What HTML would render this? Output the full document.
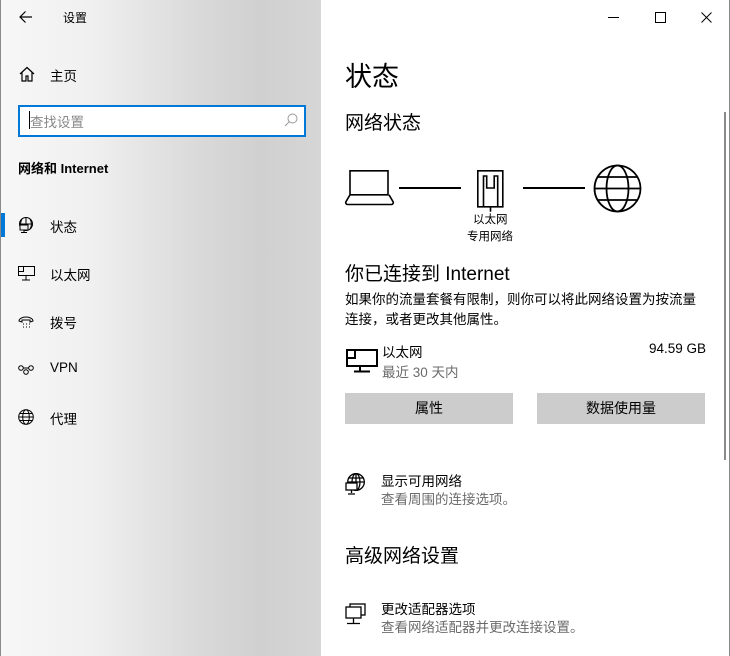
<!DOCTYPE html>
<html><head><meta charset="utf-8"><style>
*{margin:0;padding:0;box-sizing:border-box}
body{width:730px;height:656px;overflow:hidden;font-family:"Liberation Sans","Noto Sans CJK SC",sans-serif;color:#000;background:#fff;position:relative}
.left{position:absolute;left:0;top:0;width:321px;height:656px;background:linear-gradient(to right,#f7f7f7 0,#f0f0f0 90px,#d9d9d9 200px,#d0d0d0 260px,#d6d6d6 321px);border-left:1px solid #8a8a8a}
.right{position:absolute;left:321px;top:0;width:409px;height:656px;background:#fff;border-right:1px solid #8a8a8a}
.a{position:absolute;white-space:nowrap}
svg{position:absolute;overflow:visible}
.s{font-size:13.5px}
.g{color:#6b6b6b}
.btn{position:absolute;top:393px;height:31px;background:#ccc;font-size:14px;text-align:center;line-height:31px}
</style></head><body>
<div style="position:absolute;left:0;top:0;width:730px;height:1px;background:#5a5a5a"></div>
<div style="position:absolute;left:0;top:655px;width:730px;height:1px;background:#5a5a5a"></div>
<div class="left">
<svg style="left:18px;top:10px" width="14" height="14"><path d="M13 7H1M6.5 1.5L1 7l5.5 5.5" stroke="#000" stroke-width="1.2" fill="none"/></svg>
<div class="a" style="left:62px;top:9px;font-size:12px">设置</div>
<svg style="left:18px;top:66px" width="16" height="16"><path d="M1 8L8 1.5 15 8M3 6.5V15h4v-5h2v5h4V6.5" stroke="#000" stroke-width="1.2" fill="none"/></svg>
<div class="a s" style="left:49px;top:65px">主页</div>
<div class="a" style="left:17px;top:105px;width:288px;height:32px;border:2px solid #0078d7;background:#fff"></div>
<div class="a" style="left:28px;top:111px;width:1px;height:18px;background:#000"></div>
<div class="a" style="left:29px;top:111px;font-size:13.5px;color:#888">查找设置</div>
<svg style="left:283px;top:113px" width="14" height="14"><circle cx="8.5" cy="5.5" r="4.5" stroke="#999" fill="none"/><path d="M5.5 8.5L1 13" stroke="#999"/></svg>
<div class="a" style="left:17px;top:158px;font-size:13px;font-weight:bold">网络和 Internet</div>
<div class="a" style="left:0;top:213px;width:4px;height:24px;background:#0078d7"></div>
<svg style="left:17px;top:217px" width="16" height="16"><circle cx="8" cy="7" r="6.5" stroke="#000" fill="none"/><path d="M1.5 7h13M8 .5v13M4 2a10 10 0 0 0 0 10M12 2a10 10 0 0 1 0 10" stroke="#000" fill="none"/><rect x="2" y="8" width="8" height="5" fill="#eee" stroke="#000"/><path d="M6 13v2M3 15.5h6" stroke="#000"/></svg>
<div class="a s" style="left:49px;top:216px">状态</div>
<svg style="left:17px;top:266px" width="17" height="15"><rect x=".5" y=".5" width="16" height="9" stroke="#000" fill="none"/><rect x=".5" y=".5" width="5" height="5" stroke="#000" fill="none"/><path d="M8 9.5v4M4 14h8" stroke="#000"/></svg>
<div class="a s" style="left:49px;top:264px">以太网</div>
<svg style="left:17px;top:316px" width="16" height="12"><path d="M1 5a7 4 0 0 1 14 0l-3 1V4H4v2z" stroke="#000" fill="none"/><path d="M5 8h1M8 8h1M11 8h1M5 11h1M8 11h1M11 11h1" stroke="#000"/></svg>
<div class="a s" style="left:49px;top:312px">拨号</div>
<svg style="left:17px;top:365px" width="16" height="10"><circle cx="3" cy="3" r="2.3" stroke="#000" fill="none"/><circle cx="13" cy="3" r="2.3" stroke="#000" fill="none"/><circle cx="8" cy="7" r="2.3" stroke="#000" fill="none"/><path d="M5 3h6" stroke="#000"/></svg>
<div class="a s" style="left:49px;top:360px">VPN</div>
<svg style="left:17px;top:409px" width="16" height="16"><circle cx="8" cy="8" r="7.3" stroke="#000" fill="none"/><ellipse cx="8" cy="8" rx="3.3" ry="7.3" stroke="#000" fill="none"/><path d="M.7 8h14.6M2 4.5h12M2 11.5h12" stroke="#000"/></svg>
<div class="a s" style="left:49px;top:408px">代理</div>
</div>
<div class="right">
<svg style="left:287px;top:17px" width="12" height="1"><path d="M0 .5h11" stroke="#000"/></svg>
<svg style="left:334px;top:12px" width="11" height="11"><rect x=".5" y=".5" width="10" height="10" stroke="#000" fill="none"/></svg>
<svg style="left:380px;top:12px" width="11" height="11"><path d="M.5.5l10 10M10.5.5l-10 10" stroke="#000"/></svg>
<div class="a" style="left:403px;top:112px;width:2px;height:348px;background:#8a8a8a"></div>
<div class="a" style="left:24px;top:55px;font-size:27px">状态</div>
<div class="a" style="left:24px;top:108px;font-size:19px">网络状态</div>
<svg style="left:24px;top:170px" width="50" height="36"><path d="M5 .8h38v24H5zM5 24.8L.8 32a2 2 0 0 0 1.5 2.5h44.5a2 2 0 0 0 1.4-2.5l-4.2-7.2" stroke="#000" stroke-width="1.6" fill="none"/></svg>
<div class="a" style="left:78px;top:187px;width:62px;height:2px;background:#000"></div>
<svg style="left:156px;top:170px" width="28" height="42"><path d="M.8.8h25v36H.8zM6.5 36.8V6h3.2v12h7.5V6h3.5v30.8M13.5 36.8v5" stroke="#000" stroke-width="1.6" fill="none"/></svg>
<div class="a" style="left:202px;top:187px;width:62px;height:2px;background:#000"></div>
<svg style="left:272px;top:164px" width="50" height="50"><circle cx="24.5" cy="24.5" r="23" stroke="#000" stroke-width="1.8" fill="none"/><ellipse cx="24.5" cy="24.5" rx="11" ry="23" stroke="#000" stroke-width="1.8" fill="none"/><path d="M1.5 24.5h46M4 13h41M4 36h41" stroke="#000" stroke-width="1.8"/></svg>
<div class="a" style="left:152px;top:211px;font-size:11.5px">以太网</div>
<div class="a" style="left:146px;top:228px;font-size:11.5px">专用网络</div>
<div class="a" style="left:24px;top:259px;font-size:19px">你已连接到 Internet</div>
<div class="a s" style="left:24px;top:288px">如果你的流量套餐有限制，则你可以将此网络设置为按流量</div>
<div class="a s" style="left:24px;top:308px">连接，或者更改其他属性。</div>
<svg style="left:25px;top:349px" width="32" height="24"><rect x="1" y="1" width="30" height="16" stroke="#000" stroke-width="2" fill="none"/><rect x="1" y="1" width="8" height="8" stroke="#000" stroke-width="2" fill="none"/><path d="M14 17v5M8 22.5h16" stroke="#000" stroke-width="2"/></svg>
<div class="a s" style="left:61px;top:341px">以太网</div>
<div class="a s g" style="left:61px;top:361px">最近 30 天内</div>
<div class="a s" style="left:328px;top:341px">94.59 GB</div>
<div class="btn" style="left:24px;width:168px">属性</div>
<div class="btn" style="left:216px;width:168px">数据使用量</div>
<svg style="left:24px;top:473px" width="20" height="24"><circle cx="11" cy="9" r="8.3" stroke="#000" stroke-width="1.3" fill="none"/><ellipse cx="11" cy="9" rx="4" ry="8.3" stroke="#000" stroke-width="1.3" fill="none"/><path d="M2.7 9h16.6M11 .7v16.6M3 5h16" stroke="#000" stroke-width="1.3"/><rect x="1" y="10" width="11" height="7" fill="#fff" stroke="#000" stroke-width="1.3"/><path d="M6.5 17v3M3 21h7" stroke="#000" stroke-width="1.3"/></svg>
<div class="a s" style="left:60px;top:470px">显示可用网络</div>
<div class="a s g" style="left:60px;top:488px">查看周围的连接选项。</div>
<div class="a" style="left:24px;top:541px;font-size:19px">高级网络设置</div>
<svg style="left:24px;top:603px" width="22" height="24"><rect x="5" y="1" width="15" height="11" stroke="#000" stroke-width="1.3" fill="#fff"/><rect x="1" y="4" width="15" height="11" stroke="#000" stroke-width="1.3" fill="#fff"/><path d="M8.5 15v5M2 20.5h13" stroke="#000" stroke-width="1.3"/></svg>
<div class="a s" style="left:60px;top:598px">更改适配器选项</div>
<div class="a s g" style="left:60px;top:616px">查看网络适配器并更改连接设置。</div>
</div>
</body></html>
